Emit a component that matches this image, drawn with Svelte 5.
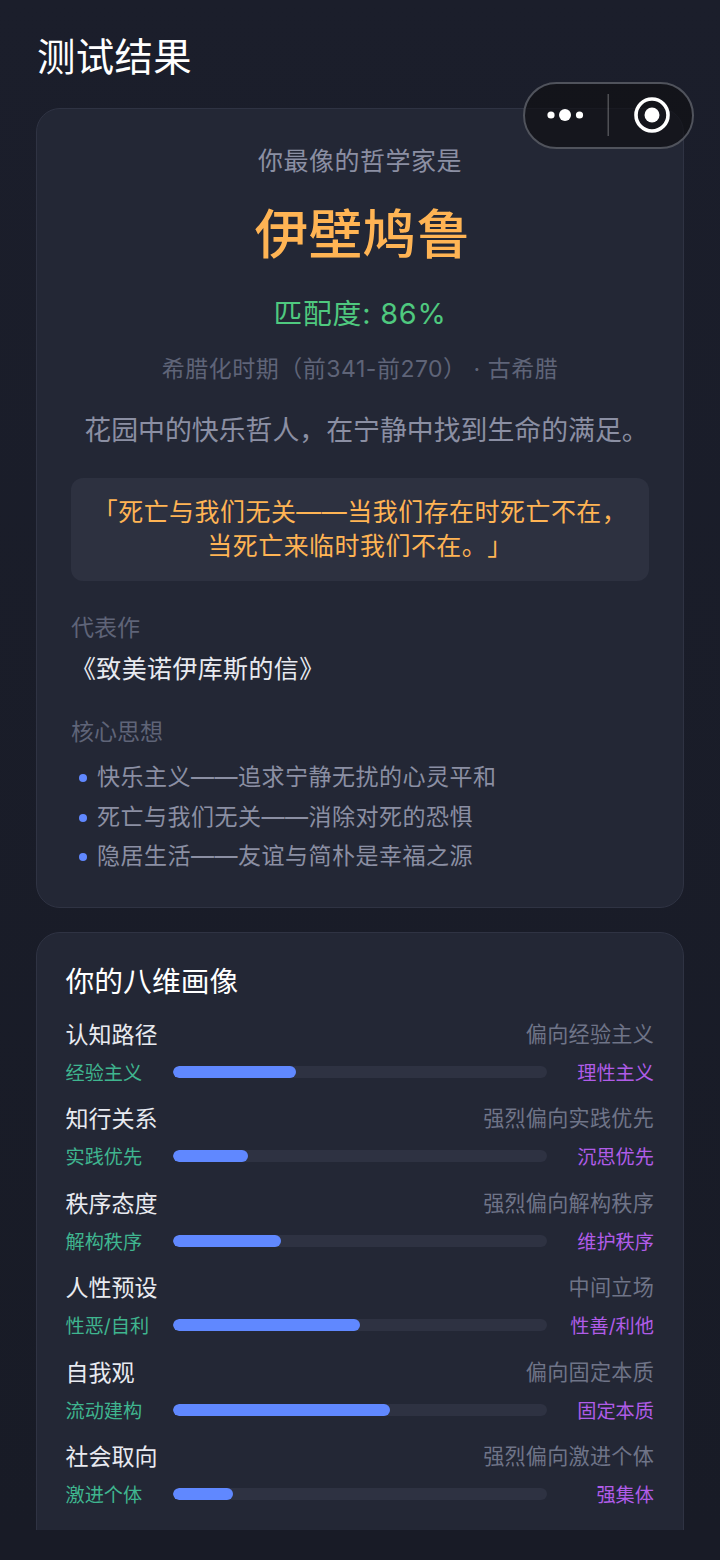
<script lang="ts">
  const ideas = [
    '快乐主义——追求宁静无扰的心灵平和',
    '死亡与我们无关——消除对死的恐惧',
    '隐居生活——友谊与简朴是幸福之源'
  ];

  const dimensions = [
    { name: '认知路径', verdict: '偏向经验主义', left: '经验主义', right: '理性主义', value: 33 },
    { name: '知行关系', verdict: '强烈偏向实践优先', left: '实践优先', right: '沉思优先', value: 20 },
    { name: '秩序态度', verdict: '强烈偏向解构秩序', left: '解构秩序', right: '维护秩序', value: 29 },
    { name: '人性预设', verdict: '中间立场', left: '性恶/自利', right: '性善/利他', value: 50 },
    { name: '自我观', verdict: '偏向固定本质', left: '流动建构', right: '固定本质', value: 58 },
    { name: '社会取向', verdict: '强烈偏向激进个体', left: '激进个体', right: '强集体', value: 16 }
  ];
</script>

<div class="page">
  <h1 class="title">测试结果</h1>

  <section class="card result">
    <p class="intro">你最像的哲学家是</p>
    <p class="name">伊壁鸠鲁</p>
    <p class="match">匹配度: 86%</p>
    <p class="era">希腊化时期（前341-前270） · 古希腊</p>
    <p class="desc">花园中的快乐哲人，在宁静中找到生命的满足。</p>
    <blockquote class="quote">「死亡与我们无关——当我们存在时死亡不在，<br />当死亡来临时我们不在。」</blockquote>

    <h2 class="label">代表作</h2>
    <p class="work">《致美诺伊库斯的信》</p>

    <h2 class="label label-ideas">核心思想</h2>
    <ul class="ideas">
      {#each ideas as idea}
        <li>{idea}</li>
      {/each}
    </ul>
  </section>

  <section class="card profile">
    <h2 class="profile-title">你的八维画像</h2>
    {#each dimensions as dim}
      <div class="dim">
        <div class="dim-head">
          <span class="dim-name">{dim.name}</span>
          <span class="dim-verdict">{dim.verdict}</span>
        </div>
        <div class="dim-scale">
          <span class="pole pole-left">{dim.left}</span>
          <div class="track">
            <div class="fill" style="width: {dim.value}%"></div>
          </div>
          <span class="pole pole-right">{dim.right}</span>
        </div>
      </div>
    {/each}
  </section>

  <div class="capsule">
    <svg class="capsule-icons" width="171" height="67" viewBox="0 0 171 67" aria-hidden="true">
      <circle cx="28" cy="33" r="3.6" fill="#fff" />
      <circle cx="42" cy="33" r="6" fill="#fff" />
      <circle cx="56.500" cy="33" r="3.6" fill="#fff" />
      <rect x="84.500" y="12" width="1.500" height="42" fill="#fff" fill-opacity="0.25" />
      <circle cx="129" cy="33" r="16" fill="none" stroke="#fff" stroke-width="3.600" />
      <circle cx="129" cy="33" r="7.500" fill="#fff" />
    </svg>
  </div>
</div>

<style>
  :global(body) {
    background: #181b26;
  }

  .page {
    position: relative;
    box-sizing: border-box;
    height: 1530px;
    overflow: hidden;
    padding: 30px 36px 0;
    font-family: "Inter", "Noto Sans CJK SC", sans-serif;
    text-spacing-trim: space-all;
    background: linear-gradient(180deg, #1b1e2b 0%, #181b26 100%);
  }

  p, h1, h2, ul, blockquote {
    margin: 0;
    padding: 0;
    font-weight: 400;
  }

  .title {
    font-size: 38.4px;
    line-height: 54px;
    letter-spacing: 0.4px;
    padding-left: 1px;
    color: #fff;
    margin-bottom: 24px;
  }

  .card {
    box-sizing: border-box;
    background: #232735;
    border: 1px solid #2f3343;
    border-radius: 24px;
  }

  .result {
    height: 800px;
    padding: 34px 34px 0;
    margin-bottom: 24px;
    text-align: center;
  }

  .intro {
    font-size: 25px;
    line-height: 36px;
    letter-spacing: 0.5px;
    color: #8b8fa3;
  }

  .name {
    font-size: 53.76px;
    font-weight: 500;
    line-height: 76px;
    margin-top: 18px;
    padding-left: 5px;
    letter-spacing: 0.3px;
    color: #ffb454;
  }

  .match {
    font-size: 28.8px;
    line-height: 44px;
    letter-spacing: 0.8px;
    margin-top: 19px;
    color: #4fc97f;
  }

  .era {
    font-size: 23px;
    line-height: 34px;
    letter-spacing: 0.5px;
    margin-top: 16px;
    color: #5f6478;
  }

  .desc {
    font-size: 26.88px;
    line-height: 40px;
    margin-top: 24px;
    padding-left: 13px;
    color: #8b8fa3;
  }

  .quote {
    margin-top: 28px;
    padding: 18px 0;
    border-radius: 12px;
    background: #2d3140;
    font-size: 24.96px;
    line-height: 33.500px;
    letter-spacing: 0.5px;
    color: #ffb454;
  }

  .label {
    font-size: 23.04px;
    line-height: 32px;
    color: #5f6478;
    text-align: left;
  }

  .quote + .label {
    margin-top: 31px;
  }

  .work {
    font-size: 24.96px;
    line-height: 36px;
    letter-spacing: 0.4px;
    margin-top: 7px;
    color: #e8eaf0;
    text-align: left;
  }

  .label-ideas {
    margin-top: 29px;
  }

  .ideas {
    list-style: none;
    margin-top: 10px;
    text-align: left;
    color: #8b8fa3;
    font-size: 23.04px;
    line-height: 39.500px;
    letter-spacing: 0.47px;
  }

  .ideas li {
    position: relative;
    padding-left: 26px;
  }

  .ideas li::before {
    content: "";
    position: absolute;
    left: 8px;
    top: 16px;
    width: 8px;
    height: 8px;
    border-radius: 50%;
    background: #6088ff;
  }

  .profile {
    height: 640px;
    padding: 29px 29px 0 28.500px;
    border-radius: 24px 24px 0 0;
  }

  .profile-title {
    font-size: 28.8px;
    line-height: 40px;
    color: #fff;
    margin-bottom: 12.700px;
  }

  .dim {
    height: 84.500px;
  }

  .dim-head {
    display: flex;
    justify-content: space-between;
    align-items: center;
    height: 36px;
  }

  .dim-name {
    font-size: 23.04px;
    color: #e8eaf0;
  }

  .dim-verdict {
    font-size: 21.12px;
    letter-spacing: 0.25px;
    color: #6f7488;
  }

  .dim-scale {
    display: flex;
    align-items: center;
    height: 36px;
    margin-top: 3px;
  }

  .pole {
    width: 107px;
    flex: none;
    font-size: 19.2px;
  }

  .pole-left {
    width: 107.500px;
    color: #3fb58f;
  }

  .pole-right {
    color: #b05ce8;
    text-align: right;
  }

  .track {
    flex: 1;
    height: 12px;
    border-radius: 6px;
    background: #2e3242;
    overflow: hidden;
  }

  .fill {
    height: 100%;
    border-radius: 6px;
    background: #6088ff;
  }

  .capsule {
    position: absolute;
    left: 523px;
    top: 82px;
    width: 171px;
    height: 67px;
    box-sizing: border-box;
    border: 2px solid #50535c;
    border-radius: 34px;
    background: rgba(15, 16, 20, 0.7);
  }

  .capsule-icons {
    position: absolute;
    left: -2px;
    top: -2px;
  }
</style>
